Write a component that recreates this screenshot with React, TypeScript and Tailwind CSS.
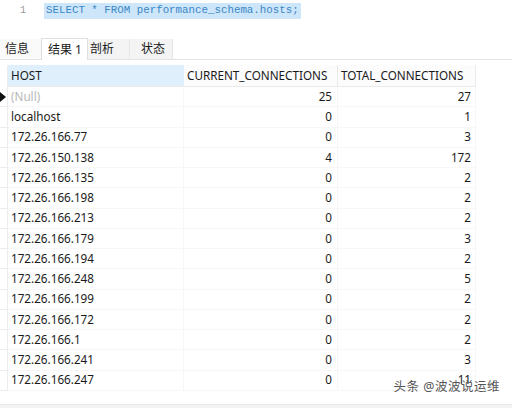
import React from "react";

const rows: [string, string, string][] = [
  ["(Null)", "25", "27"],
  ["localhost", "0", "1"],
  ["172.26.166.77", "0", "3"],
  ["172.26.150.138", "4", "172"],
  ["172.26.166.135", "0", "2"],
  ["172.26.166.198", "0", "2"],
  ["172.26.166.213", "0", "2"],
  ["172.26.166.179", "0", "3"],
  ["172.26.166.194", "0", "2"],
  ["172.26.166.248", "0", "5"],
  ["172.26.166.199", "0", "2"],
  ["172.26.166.172", "0", "2"],
  ["172.26.166.1", "0", "2"],
  ["172.26.166.241", "0", "3"],
  ["172.26.166.247", "0", "11"],
];

const font = { fontFamily: '"Noto Sans", "Noto Sans CJK SC", sans-serif' };

export default function App() {
  return (
    <div className="w-[512px] h-[408px] bg-white overflow-hidden relative text-[#1a1a1a]" style={font}>
      {/* Editor line */}
      <div className="flex items-center h-[20px] pt-[1px]">
        <div className="w-[44px] pl-[20px] text-[10px] text-[#999] font-['Liberation_Mono',monospace]">1</div>
        <div className="bg-[#cde6fa] h-[16px] flex items-center pl-[2px] pr-[2px] text-[10.8px] text-[#3a86c6] font-['Liberation_Mono',monospace] whitespace-pre">
          SELECT * FROM performance_schema.hosts;
        </div>
      </div>
      <div className="h-[18px]" />
      {/* Tabs */}
      <div className="flex items-end h-[22px] border-b border-[#e3e3e3] text-[12px]">
        <div className="w-[41px] h-[20px] flex items-center pl-[5px] bg-[#fafafa]">信息</div>
        <div className="w-[47px] h-[22px] flex items-center pl-[6px] bg-white border-t border-x border-[#e0e0e0] -mb-px">结果 1</div>
        <div className="w-[42px] h-[20px] flex items-center pl-[2px] bg-[#f4f4f4] border-r border-[#e6e6e6]">剖析</div>
        <div className="w-[43px] h-[20px] flex items-center pl-[11px] bg-[#f4f4f4] border-r border-[#e6e6e6]">状态</div>
      </div>
      <div className="h-[5px]" />
      {/* Grid */}
      <div className="flex flex-col text-[11.7px]">
        <div className="flex h-[22px]">
          <div className="w-[8px] border-r border-[#ececec]" />
          <div className="w-[176px] bg-[#dff0fc] flex items-center pl-[3px] border-b border-[#eaeaea]">HOST</div>
          <div className="w-[154px] flex items-center pl-[3px] bg-[#fcfcfc] border-r border-b border-[#eaeaea]">CURRENT_CONNECTIONS</div>
          <div className="w-[138px] flex items-center pl-[3px] bg-[#fcfcfc] border-r border-b border-[#eaeaea]">TOTAL_CONNECTIONS</div>
        </div>
        {rows.map((r, i) => (
          <div key={i} className="flex h-[20.25px]">
            <div className="w-[8px] border-r border-b border-[#ececec] relative flex items-center">
              {i === 0 && (
                <svg width="6" height="10" viewBox="0 0 6 10" className="absolute left-0">
                  <path d="M0 0 L6 5 L0 10 Z" fill="#111" />
                </svg>
              )}
            </div>
            <div className={`w-[176px] flex items-center pl-[3px] border-r border-b border-[#f7f7f7] ${i === 0 ? "text-[#b8b8b8]" : ""}`}>{r[0]}</div>
            <div className="w-[154px] flex items-center justify-end pr-[5px] border-r border-b border-[#f7f7f7]">{r[1]}</div>
            <div className="w-[138px] flex items-center justify-end pr-[4px] border-r border-b border-[#f7f7f7]">{r[2]}</div>
          </div>
        ))}
      </div>
      <div className="absolute left-0 right-0 bottom-0 h-[4px] bg-[#f3f3f3] border-t border-[#e8e8e8]" />
      <div className="absolute right-[12px] bottom-[11px] text-[12.5px] text-[#555] tracking-[0.5px]">头条 @波波说运维</div>
    </div>
  );
}
